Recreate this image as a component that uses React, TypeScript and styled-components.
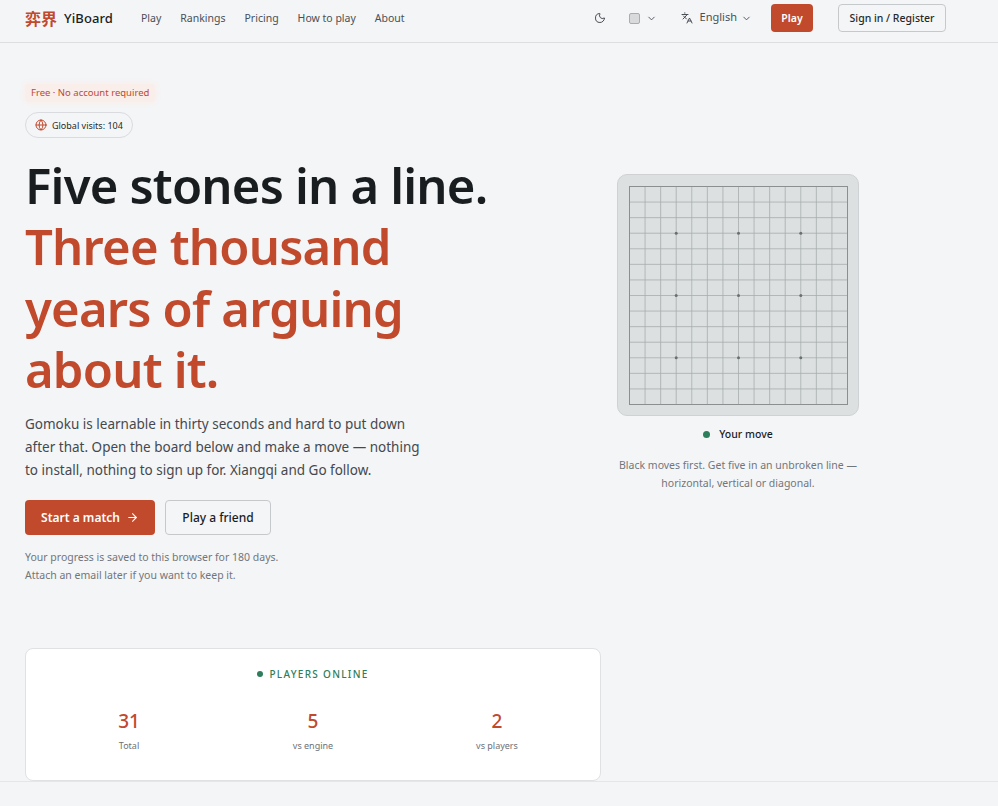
import React from 'react';
import styled, { createGlobalStyle } from 'styled-components';
import { ArrowRight, ChevronDown, Globe, Languages, Moon } from 'lucide-react';

const Global = createGlobalStyle`
  * { box-sizing: border-box; }
  html, body { margin: 0; padding: 0; background: #f4f5f7; }
  body {
    font-family: "Noto Sans", "Noto Sans CJK SC", sans-serif;
    color: #1a1d1f;
    overflow: hidden;
  }
`;

const accent = '#c1492c';
const green = '#2e7d5b';

const Page = styled.div`
  width: 998px;
  height: 806px;
  overflow: hidden;
`;

const Header = styled.header`
  height: 43px;
  border-bottom: 1px solid #dcdee1;
  padding: 0 52px 6px 25px;
  display: flex;
  align-items: center;
`;

const Logo = styled.div`
  display: flex;
  align-items: center;
  gap: 7px;
  margin-right: 28px;
`;

const LogoMark = styled.span`
  color: ${accent};
  font-size: 16px;
  font-weight: 700;
`;

const LogoName = styled.span`
  font-size: 13px;
  font-weight: 500;
  letter-spacing: 0.1px;
`;

const Nav = styled.nav`
  display: flex;
  gap: 19px;
  flex: 1;
`;

const NavLink = styled.a`
  font-size: 10.5px;
  color: #4a4f55;
`;

const Tools = styled.div`
  display: flex;
  align-items: center;
  color: #4a4f55;
`;

const Swatch = styled.span`
  width: 11px;
  height: 11px;
  border-radius: 2px;
  background: #d8dadc;
  border: 1px solid #a9adb1;
  margin: 0 6px 0 23px;
`;

const LangLabel = styled.span`
  font-size: 11px;
  line-height: 14px;
  margin: 0 4px 2px 7px;
`;

const PlayButton = styled.button`
  height: 28px;
  width: 42px;
  margin-left: 19px;
  border: 0;
  border-radius: 4px;
  padding: 0;
  background: ${accent};
  color: #fff;
  font: 600 10.5px "Noto Sans", sans-serif;
`;

const SignButton = styled.button`
  height: 28px;
  width: 108px;
  margin-left: 25px;
  border: 1px solid #c6c9cc;
  border-radius: 4px;
  padding: 0;
  background: transparent;
  color: #26292c;
  font: 500 10.5px "Noto Sans", sans-serif;
`;

const Main = styled.main`
  padding: 41px 0 0 25px;
  display: grid;
  grid-template-columns: 576px 242px;
  column-gap: 16px;
  align-items: start;
`;

const Left = styled.div`
  display: flex;
  flex-direction: column;
  align-items: flex-start;
`;

const FreeBadge = styled.span`
  font-size: 9.5px;
  line-height: 18px;
  height: 18px;
  padding: 0 6px;
  color: ${accent};
  background: #f9eeea;
  border-radius: 4px;
  box-shadow: 0 0 6px 1px #f9eeea;
`;

const VisitBadge = styled.span`
  display: flex;
  align-items: center;
  gap: 5px;
  margin-top: 10px;
  height: 26px;
  padding: 0 9px;
  border: 1px solid #d9dbde;
  border-radius: 13px;
  font-size: 9px;
  color: ${accent};
`;

const VisitText = styled.span`
  color: #26292c;
`;

const Title = styled.h1`
  margin: 17px 0 0;
  font-size: 49px;
  line-height: 61.3px;
  font-weight: 600;
  letter-spacing: -0.8px;
  color: #1a1d1f;
`;

const TitleAccent = styled.span`
  display: block;
  color: ${accent};
  width: 400px;
`;

const Lead = styled.p`
  margin: 13px 0 0;
  width: 410px;
  font-size: 13.5px;
  line-height: 23px;
  color: #45494e;
`;

const Actions = styled.div`
  display: flex;
  gap: 10px;
  margin-top: 18px;
`;

const StartButton = styled.button`
  width: 130px;
  height: 35px;
  display: flex;
  align-items: center;
  justify-content: center;
  gap: 6px;
  border: 0;
  border-radius: 4px;
  background: ${accent};
  color: #fff;
  font: 600 12px "Noto Sans", sans-serif;
`;

const FriendButton = styled.button`
  width: 106px;
  height: 35px;
  border: 1px solid #c6c9cc;
  border-radius: 4px;
  background: transparent;
  color: #1a1d1f;
  font: 500 12px "Noto Sans", sans-serif;
`;

const Note = styled.p`
  margin: 13px 0 0;
  font-size: 10.5px;
  line-height: 18px;
  color: #71767b;
`;

const Right = styled.aside`
  margin-top: 90px;
  display: flex;
  flex-direction: column;
  align-items: center;
`;

const Board = styled.div`
  width: 242px;
  height: 242px;
  padding: 11px;
  background: #dde0e1;
  border: 1px solid #cfd2d4;
  border-radius: 10px;
`;

const Status = styled.div`
  margin-top: 11px;
  display: flex;
  align-items: center;
  gap: 9px;
  font-size: 10.5px;
  font-weight: 500;
  line-height: 15px;
`;

const Dot = styled.span<{ $size: number }>`
  width: ${({ $size }) => $size}px;
  height: ${({ $size }) => $size}px;
  border-radius: 50%;
  background: ${green};
`;

const BoardHint = styled.p`
  margin: 14px 0 0;
  font-size: 10.5px;
  line-height: 18px;
  white-space: nowrap;
  text-align: center;
  color: #71767b;
`;

const OnlineCard = styled.section`
  width: 576px;
  height: 133px;
  margin-top: 64px;
  padding-top: 18px;
  background: #fff;
  border: 1px solid #dfe1e3;
  border-radius: 8px;
`;

const OnlineTitle = styled.div`
  display: flex;
  align-items: center;
  justify-content: center;
  gap: 6px;
  font-size: 10px;
  line-height: 14px;
  letter-spacing: 1.3px;
  font-weight: 500;
  color: ${green};
`;

const Stats = styled.div`
  display: grid;
  grid-template-columns: repeat(3, 1fr);
  margin: 27px 11px 0;
`;

const Stat = styled.div`
  display: flex;
  flex-direction: column;
  align-items: center;
`;

const StatValue = styled.span`
  font-size: 19px;
  line-height: 26px;
  font-weight: 500;
  color: ${accent};
`;

const StatLabel = styled.span`
  margin-top: 6px;
  font-size: 9px;
  line-height: 12px;
  color: #6d7277;
`;

const FooterRule = styled.div`
  border-top: 1px solid #e4e6e8;
`;

const cell = 218 / 14;
const lines = Array.from({ length: 15 }, (_, i) => i * cell);
const stars = [3, 7, 11];

const BoardGrid = () => (
  <svg width="218" height="218" viewBox="-0.5 -0.5 218 218" style={{ display: 'block', overflow: 'visible' }}>
    {lines.map((p) => (
      <g key={p} stroke="#a7acac" strokeWidth="0.8">
        <line x1={p} y1={0} x2={p} y2={218} />
        <line x1={0} y1={p} x2={218} y2={p} />
      </g>
    ))}
    <rect x="0" y="0" width="218" height="218" fill="none" stroke="#8a8f8f" strokeWidth="1" />
    {stars.map((r) =>
      stars.map((c) => <circle key={`${r}-${c}`} cx={c * cell} cy={r * cell} r="1.5" fill="#6b6f70" />)
    )}
  </svg>
);

const App = () => (
  <Page>
    <Global />
    <Header>
      <Logo>
        <LogoMark>弈界</LogoMark>
        <LogoName>YiBoard</LogoName>
      </Logo>
      <Nav>
        <NavLink>Play</NavLink>
        <NavLink>Rankings</NavLink>
        <NavLink>Pricing</NavLink>
        <NavLink>How to play</NavLink>
        <NavLink>About</NavLink>
      </Nav>
      <Tools>
        <Moon size={12} />
        <Swatch />
        <ChevronDown size={11} />
        <Languages size={12} style={{ marginLeft: 24 }} />
        <LangLabel>English</LangLabel>
        <ChevronDown size={11} />
      </Tools>
      <PlayButton>Play</PlayButton>
      <SignButton>Sign in / Register</SignButton>
    </Header>
    <Main>
      <Left>
        <FreeBadge>Free · No account required</FreeBadge>
        <VisitBadge>
          <Globe size={12} />
          <VisitText>Global visits: 104</VisitText>
        </VisitBadge>
        <Title>
          Five stones in a line.
          <TitleAccent>Three thousand years of arguing about it.</TitleAccent>
        </Title>
        <Lead>
          Gomoku is learnable in thirty seconds and hard to put down after that. Open the board below and make a
          move — nothing to install, nothing to sign up for. Xiangqi and Go follow.
        </Lead>
        <Actions>
          <StartButton>
            Start a match <ArrowRight size={13} />
          </StartButton>
          <FriendButton>Play a friend</FriendButton>
        </Actions>
        <Note>
          Your progress is saved to this browser for 180 days.
          <br />
          Attach an email later if you want to keep it.
        </Note>
        <OnlineCard>
          <OnlineTitle>
            <Dot $size={6} />
            PLAYERS ONLINE
          </OnlineTitle>
          <Stats>
            <Stat>
              <StatValue>31</StatValue>
              <StatLabel>Total</StatLabel>
            </Stat>
            <Stat>
              <StatValue>5</StatValue>
              <StatLabel>vs engine</StatLabel>
            </Stat>
            <Stat>
              <StatValue>2</StatValue>
              <StatLabel>vs players</StatLabel>
            </Stat>
          </Stats>
        </OnlineCard>
      </Left>
      <Right>
        <Board>
          <BoardGrid />
        </Board>
        <Status>
          <Dot $size={7} />
          Your move
        </Status>
        <BoardHint>
          Black moves first. Get five in an unbroken line —
          <br />
          horizontal, vertical or diagonal.
        </BoardHint>
      </Right>
    </Main>
    <FooterRule />
  </Page>
);

export default App;
